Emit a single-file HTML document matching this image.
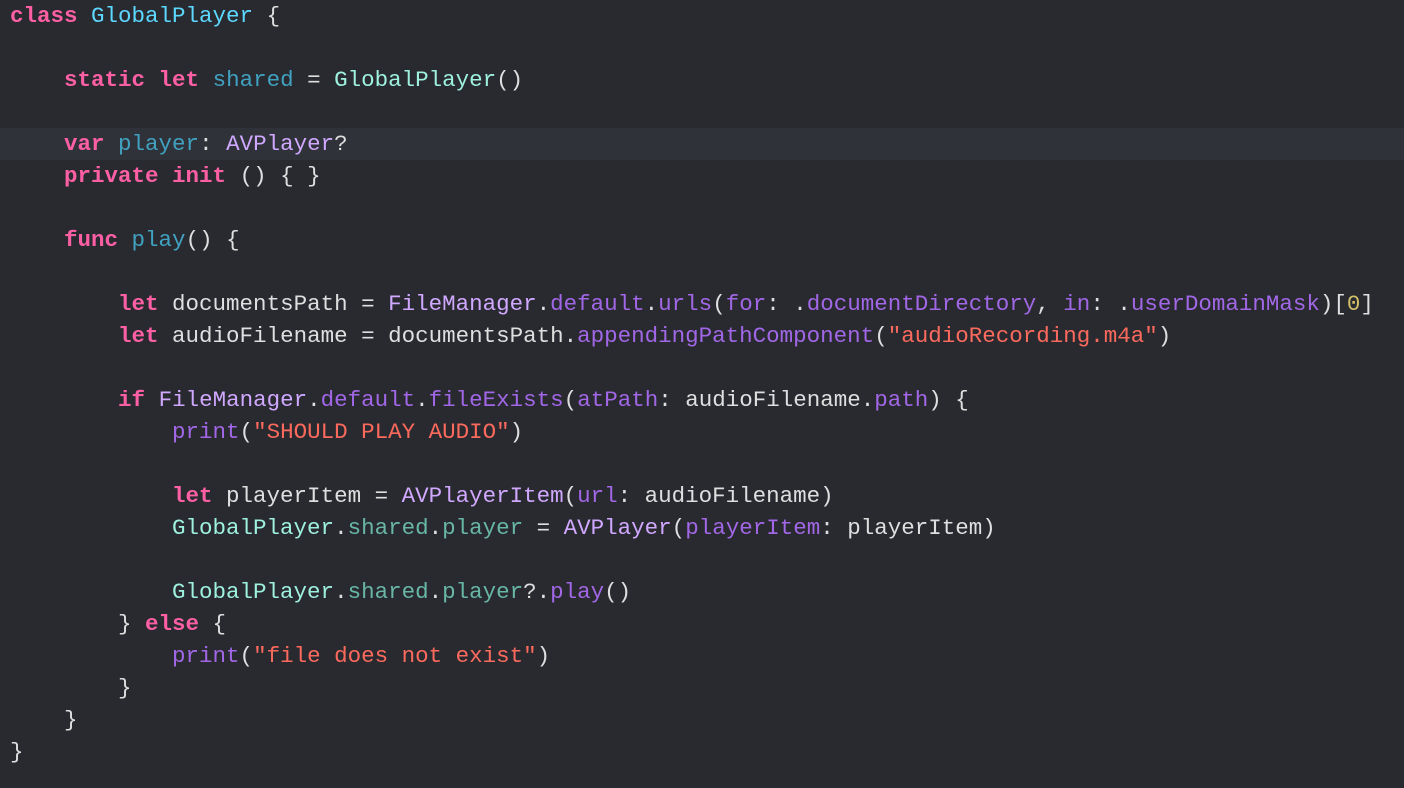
<!DOCTYPE html><html><head><style>
body{margin:0;background:#292a30;width:1404px;height:788px;overflow:hidden}
.c{position:relative;font-family:"Liberation Mono",monospace;font-size:22.5px;color:#dfdfe0}
.l{height:32px;line-height:32px;padding-left:10px;white-space:pre}
.h{background:#2f3239}
.k{color:#fc5fa3;font-weight:bold}
.d{color:#5dd8ff}
.p{color:#41a1c0}
.t{color:#9ef1dd}
.tp{color:#67b7a4}
.s{color:#d0a8ff}
.m{color:#a167e6}
.st{color:#fc6a5d}
.n{color:#d0bf69}
</style></head><body><div class="c"><div class="l"><span class="k">class</span> <span class="d">GlobalPlayer</span> {</div><div class="l"> </div><div class="l">    <span class="k">static</span> <span class="k">let</span> <span class="p">shared</span> = <span class="t">GlobalPlayer</span>()</div><div class="l"> </div><div class="l h">    <span class="k">var</span> <span class="p">player</span>: <span class="s">AVPlayer</span>?</div><div class="l">    <span class="k">private</span> <span class="k">init</span> () { }</div><div class="l"> </div><div class="l">    <span class="k">func</span> <span class="p">play</span>() {</div><div class="l"> </div><div class="l">        <span class="k">let</span> documentsPath = <span class="s">FileManager</span>.<span class="m">default</span>.<span class="m">urls</span>(<span class="m">for</span>: .<span class="m">documentDirectory</span>, <span class="m">in</span>: .<span class="m">userDomainMask</span>)[<span class="n">0</span>]</div><div class="l">        <span class="k">let</span> audioFilename = documentsPath.<span class="m">appendingPathComponent</span>(<span class="st">"audioRecording.m4a"</span>)</div><div class="l"> </div><div class="l">        <span class="k">if</span> <span class="s">FileManager</span>.<span class="m">default</span>.<span class="m">fileExists</span>(<span class="m">atPath</span>: audioFilename.<span class="m">path</span>) {</div><div class="l">            <span class="m">print</span>(<span class="st">"SHOULD PLAY AUDIO"</span>)</div><div class="l"> </div><div class="l">            <span class="k">let</span> playerItem = <span class="s">AVPlayerItem</span>(<span class="m">url</span>: audioFilename)</div><div class="l">            <span class="t">GlobalPlayer</span>.<span class="tp">shared</span>.<span class="tp">player</span> = <span class="s">AVPlayer</span>(<span class="m">playerItem</span>: playerItem)</div><div class="l"> </div><div class="l">            <span class="t">GlobalPlayer</span>.<span class="tp">shared</span>.<span class="tp">player</span>?.<span class="m">play</span>()</div><div class="l">        } <span class="k">else</span> {</div><div class="l">            <span class="m">print</span>(<span class="st">"file does not exist"</span>)</div><div class="l">        }</div><div class="l">    }</div><div class="l">}</div></div></body></html>
